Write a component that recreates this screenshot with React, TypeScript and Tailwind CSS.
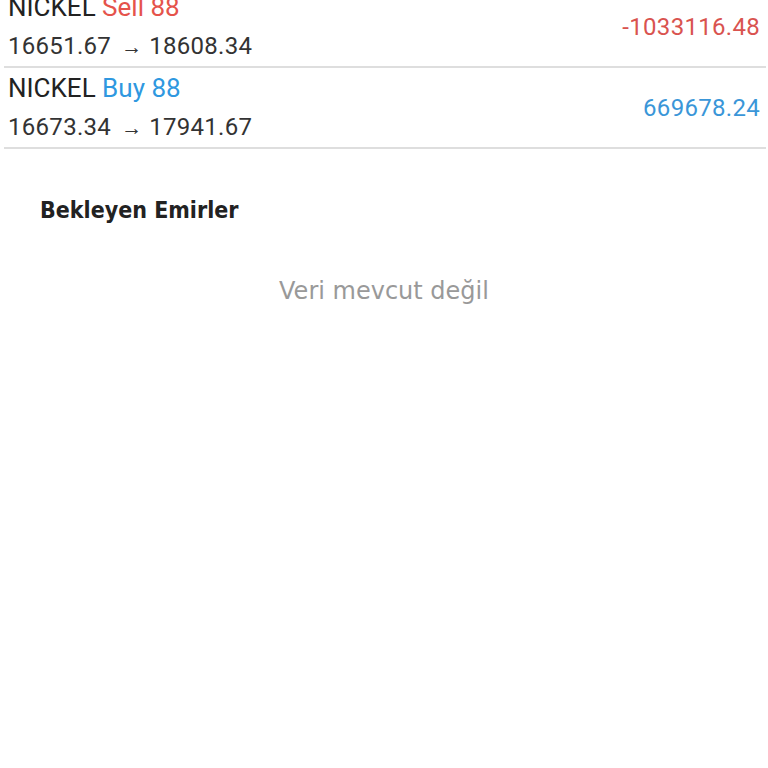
const positions = [
  { symbol: "NICKEL", side: "Sell", volume: 88, open: "16651.67", current: "18608.34", profit: "-1033116.48" },
  { symbol: "NICKEL", side: "Buy", volume: 88, open: "16673.34", current: "17941.67", profit: "669678.24" },
];

function PositionRow({ p }: { p: (typeof positions)[number] }) {
  const sell = p.side === "Sell";
  const color = sell ? "text-[#e5534b]" : "text-[#2f98e0]";
  return (
    <div className="flex items-center justify-between h-[81px] pl-1 pr-[6px] border-b-2 border-[#dedede]">
      <div className="flex flex-col justify-center">
        <div className="text-[26px] leading-[39px] text-[#222] mt-[2px]">
          {p.symbol} <span className={color}>{p.side} {p.volume}</span>
        </div>
        <div className="text-[24px] leading-[39px] text-[#333] tracking-[0.3px]">
          {p.open}
          <span className="inline-block w-[18px] mx-[10px] text-[21px] text-center">→</span>
          {p.current}
        </div>
      </div>
      <div className={`text-[24px] tracking-[0.3px] ${sell ? "text-[#d9534f]" : "text-[#3a96d8]"}`}>{p.profit}</div>
    </div>
  );
}

export default function App() {
  return (
    <div className="w-[768px] h-[768px] bg-white overflow-hidden font-['Roboto',sans-serif]">
      <div className="-mt-[13px] pl-1 pr-[2px]">
        {positions.map((p, i) => (
          <PositionRow key={i} p={p} />
        ))}
      </div>
      <div>
        <h2 className="pl-10 pt-[44px] text-[23px] font-bold text-[#222] font-['DejaVu_Sans_Condensed','DejaVu_Sans',sans-serif]">
          Bekleyen Emirler
        </h2>
        <p className="text-center pt-[45px] text-[24px] text-[#999] font-['DejaVu_Sans',sans-serif]">Veri mevcut değil</p>
      </div>
    </div>
  );
}
